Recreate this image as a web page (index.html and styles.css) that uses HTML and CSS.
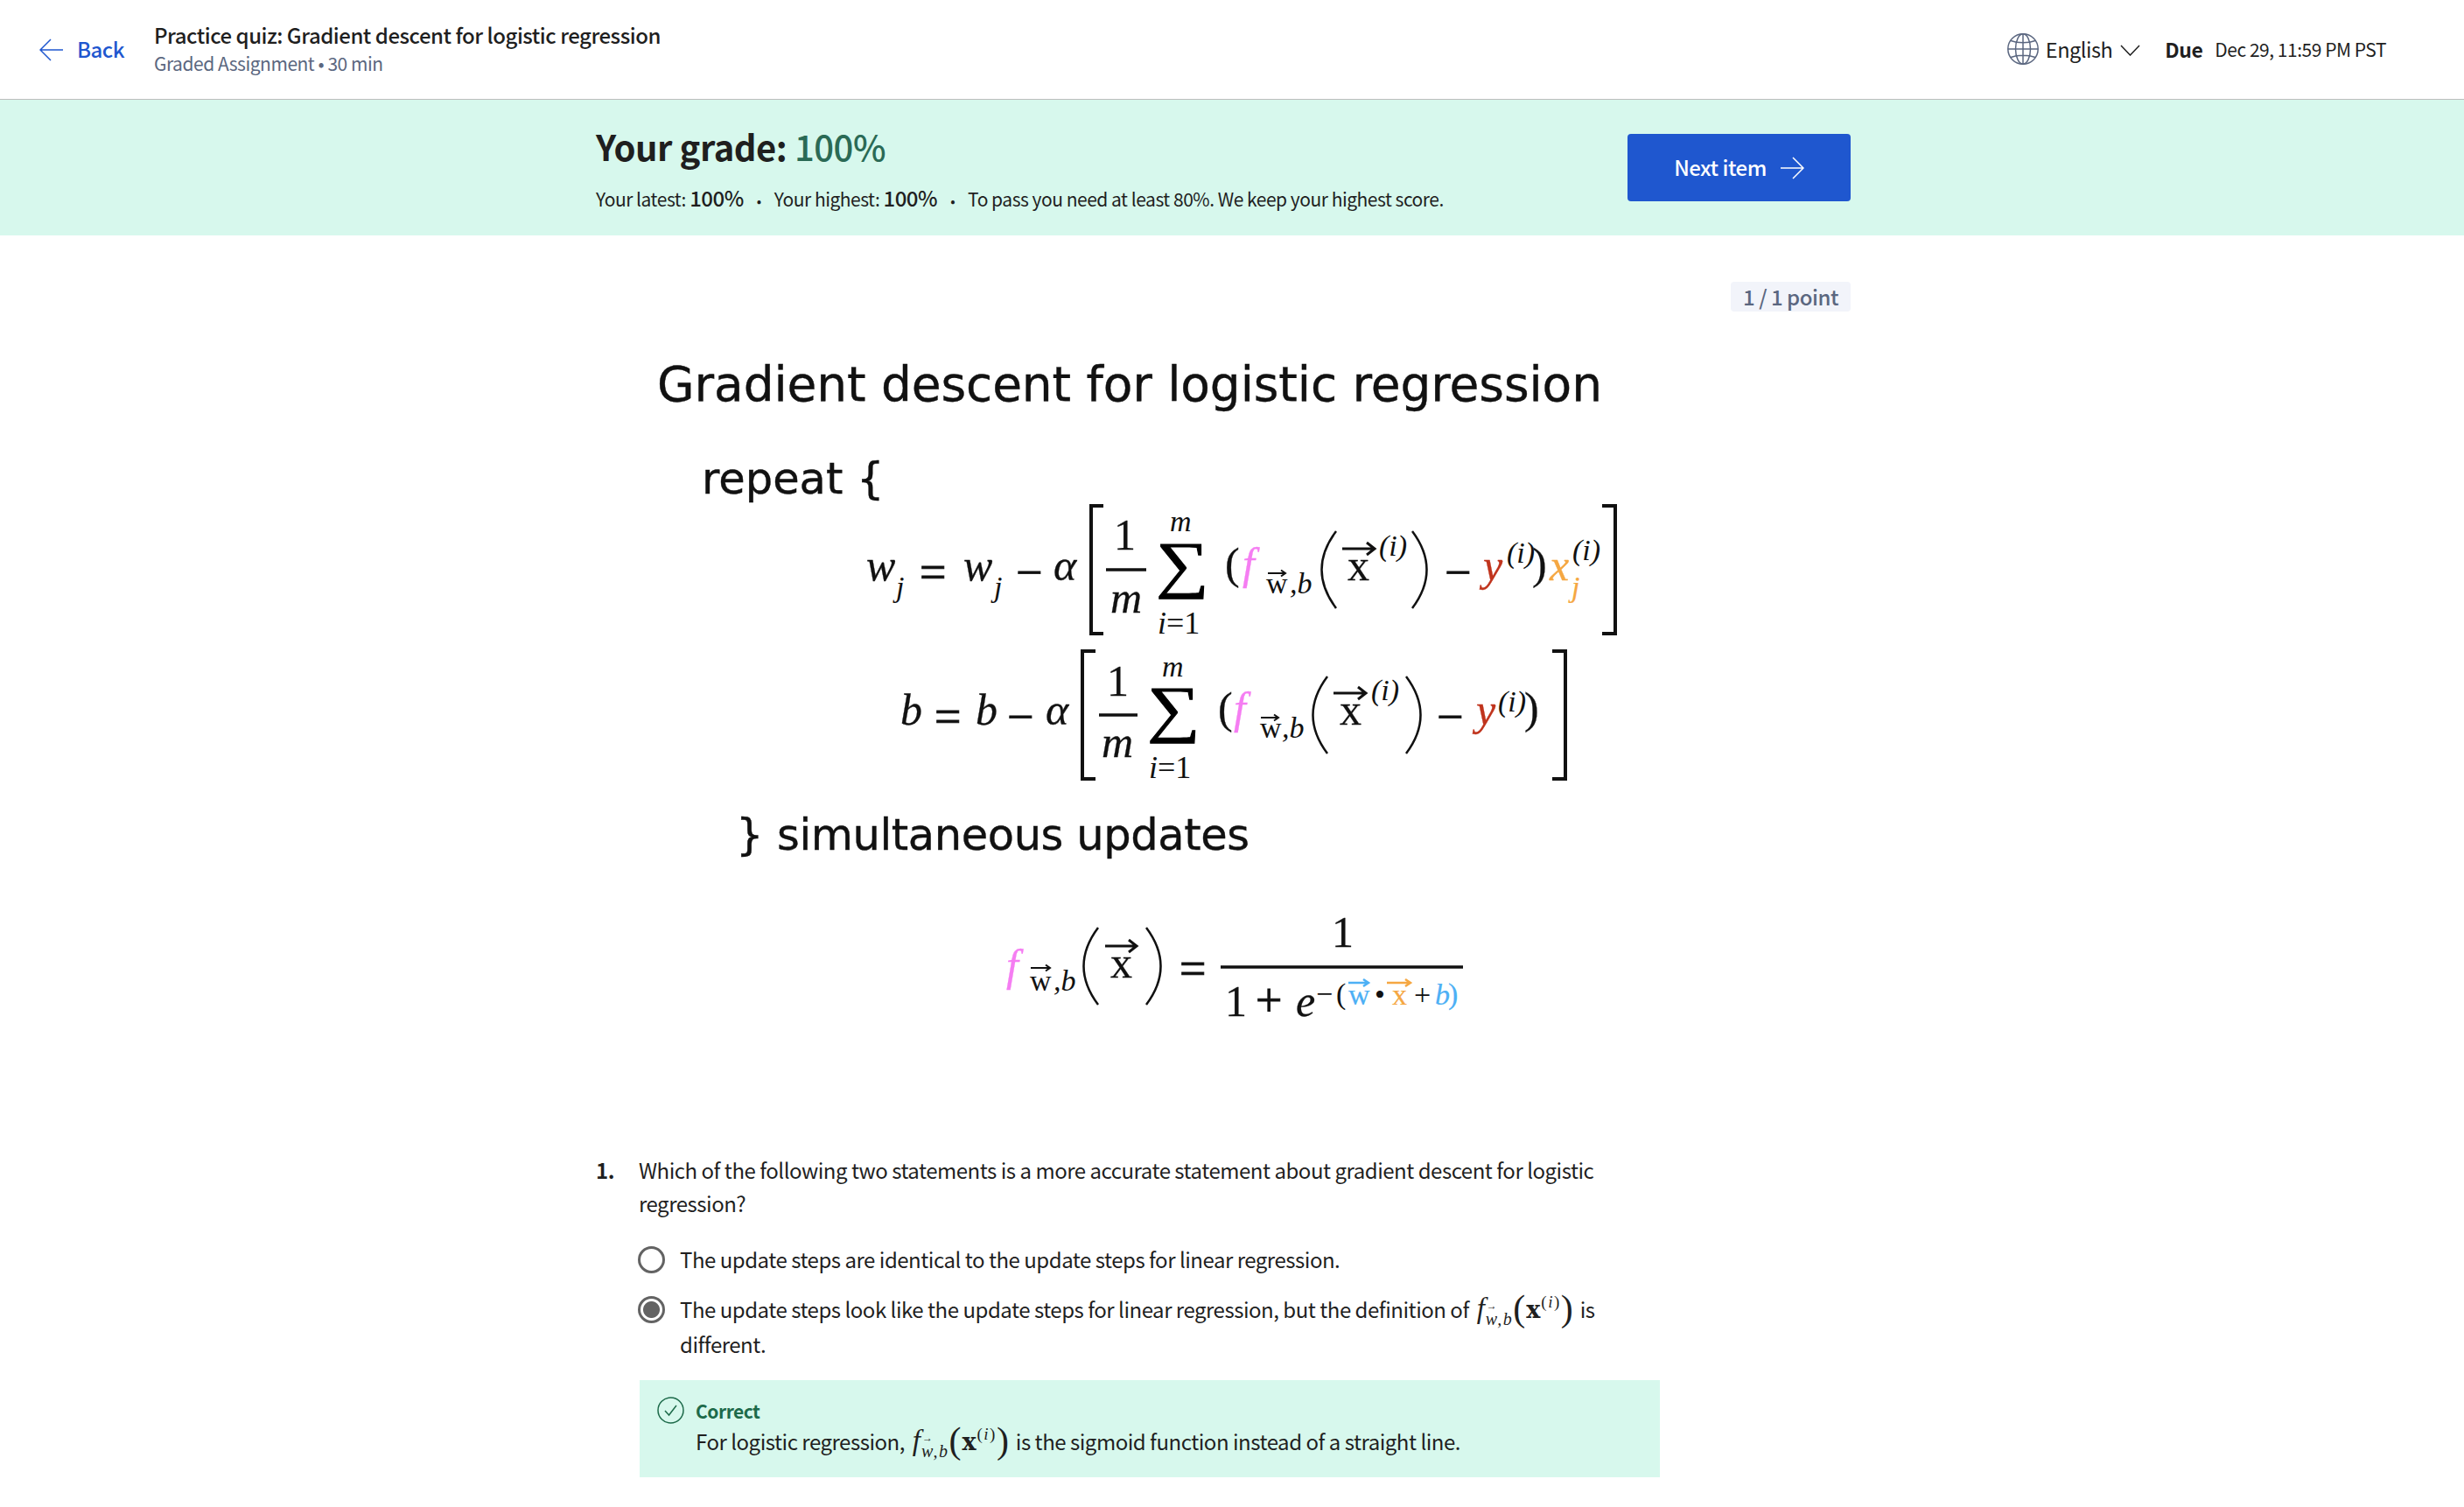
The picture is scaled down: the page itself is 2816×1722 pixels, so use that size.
FILE: index.html
```html
<!DOCTYPE html>
<html lang="en">
<head>
<meta charset="utf-8">
<title>Practice quiz: Gradient descent for logistic regression</title>
<link rel="stylesheet" href="styles.css">
</head>
<body>
<header class="topbar">
  <a class="back">
    <svg class="back-icon" viewBox="0 0 27 26"><path d="M13 1 1 13l12 12M1 13h26"/></svg>
    <span>Back</span>
  </a>
  <div class="heading">
    <div class="heading-title">Practice quiz: Gradient descent for logistic regression</div>
    <div class="heading-sub">Graded Assignment • 30 min</div>
  </div>
  <div class="lang">
    <svg class="globe" viewBox="0 0 36 36"><circle cx="18" cy="18" r="17.2"/><ellipse cx="18" cy="18" rx="8.500" ry="17.2"/><path d="M18 1v34M1 18h34M4 8.500c8 3 20 3 28 0M4 27.500c8-3 20-3 28 0"/></svg>
    <span>English</span>
    <svg class="chev" viewBox="0 0 23 13"><path d="m1 1 10.500 11L22 1"/></svg>
  </div>
  <div class="due"><b>Due</b><span>Dec 29, 11:59 PM PST</span></div>
</header>

<section class="banner">
  <div class="banner-text">
    <h1 class="grade">Your grade: <span class="grade-val">100%</span></h1>
    <p class="grade-line">Your latest: <b>100%</b><i class="dot">•</i>Your highest: <b>100%</b><i class="dot">•</i>To pass you need at least 80%. We keep your highest score.</p>
  </div>
  <a class="next"><span class="next-label">Next item</span>
    <svg class="next-icon" viewBox="0 0 27 26"><path d="M14 1l12 12-12 12M26 13H0"/></svg>
  </a>
</section>

<main class="content">
  <div class="points-row"><span class="points">1 / 1 point</span></div>

  <svg class="figure" viewBox="681 370 1434 930" role="img">
    <text class="sans" x="751" y="458" font-size="55" textLength="1080">Gradient descent for logistic regression</text>
    <text class="sans" x="802" y="564" font-size="49.500">repeat {</text>

    <!-- w_j row -->
    <text class="m it" x="990" y="663">w</text><text class="s it" x="1024" y="682">j</text>
    <text class="m op" x="1051" y="672">=</text>
    <text class="m it" x="1101" y="663">w</text><text class="s it" x="1136" y="682">j</text>
    <text class="m op" x="1161" y="672">−</text>
    <text class="m it" x="1204" y="663">α</text>
    <path class="br" d="M1261 578h-14v146h14"/>
    <text class="m" x="1273" y="628">1</text>
    <path class="bar" d="M1264 651h46"/>
    <text class="m it" x="1269" y="700">m</text>
    <text class="sum" transform="translate(1321 669) scale(1.180 1)">∑</text>
    <text class="s it" x="1337" y="607">m</text>
    <text class="s it lim" x="1323" y="724">i<tspan class="rm">=1</tspan></text>
    <text class="m" x="1400" y="661">(</text>
    <text class="m it pink" x="1420" y="661">f</text>
    <text class="s" x="1447" y="678">w</text><path class="arr" d="M1449 655h20m-5-3.500 5 3.500-5 3.500"/>
    <text class="s it" x="1474" y="678">,b</text>
    <path class="dl" d="M1527 607Q1494 651 1527 695"/>
    <text class="m" x="1540" y="663">x</text><path class="arr thick" d="M1534 627h37m-9-7 9 7-9 7"/>
    <text class="s it" x="1576" y="635">(i)</text>
    <path class="dl" d="M1614 607Q1647 651 1614 695"/>
    <text class="m op" x="1651" y="672">−</text>
    <text class="m it red" x="1695" y="663">y</text>
    <text class="s it" x="1722" y="643">(i)</text>
    <text class="m" x="1751" y="661">)</text>
    <text class="m it orange" x="1771" y="663">x</text>
    <text class="s it" x="1797" y="640">(i)</text>
    <text class="s it orange" x="1796" y="682">j</text>
    <path class="br" d="M1831 578h15v146h-15"/>

    <!-- b row -->
    <text class="m it" x="1029" y="828">b</text>
    <text class="m op" x="1068" y="837">=</text>
    <text class="m it" x="1115" y="828">b</text>
    <text class="m op" x="1151" y="837">−</text>
    <text class="m it" x="1195" y="828">α</text>
    <path class="br" d="M1252 744h-15v146h15"/>
    <text class="m" x="1265" y="795">1</text>
    <path class="bar" d="M1256 817h44"/>
    <text class="m it" x="1259" y="865">m</text>
    <text class="sum" transform="translate(1311 834) scale(1.180 1)">∑</text>
    <text class="s it" x="1328" y="773">m</text>
    <text class="s it lim" x="1313" y="889">i<tspan class="rm">=1</tspan></text>
    <text class="m" x="1392" y="826">(</text>
    <text class="m it pink" x="1410" y="826">f</text>
    <text class="s" x="1440" y="843">w</text><path class="arr" d="M1441 820h20m-5-3.500 5 3.500-5 3.500"/>
    <text class="s it" x="1465" y="843">,b</text>
    <path class="dl" d="M1517 773Q1484 817 1517 861"/>
    <text class="m" x="1531" y="828">x</text><path class="arr thick" d="M1524 792h37m-9-7 9 7-9 7"/>
    <text class="s it" x="1567" y="800">(i)</text>
    <path class="dl" d="M1607 773Q1640 817 1607 861"/>
    <text class="m op" x="1642" y="837">−</text>
    <text class="m it red" x="1687" y="828">y</text>
    <text class="s it" x="1712" y="813">(i)</text>
    <text class="m" x="1742" y="826">)</text>
    <path class="br" d="M1774 744h15v146h-15"/>

    <text class="sans" x="841" y="971" font-size="49.500">}</text>
    <text class="sans" x="888" y="971" font-size="49.500" textLength="540">simultaneous updates</text>

    <!-- sigmoid -->
    <text class="m it pink" x="1150" y="1120">f</text>
    <text class="s" x="1177" y="1132">w</text><path class="arr" d="M1178 1106h22m-5-3.500 5 3.500-5 3.500"/>
    <text class="s it" x="1204" y="1132">,b</text>
    <path class="dl" d="M1255 1060Q1222 1104 1255 1148"/>
    <text class="m" x="1269" y="1117">x</text><path class="arr thick" d="M1263 1081h36m-9-7 9 7-9 7"/>
    <path class="dl" d="M1310 1060Q1343 1104 1310 1148"/>
    <text class="m op" x="1348" y="1125">=</text>
    <path class="bar" d="M1395 1105h277"/>
    <text class="m" x="1522" y="1082">1</text>
    <text class="m" x="1400" y="1161">1</text>
    <text class="m op" x="1435" y="1161">+</text>
    <text class="m it" x="1481" y="1161">e</text>
    <text class="s" x="1504" y="1147">−</text>
    <text class="s" x="1527" y="1147">(</text>
    <text class="s blue" x="1541" y="1148">w</text><path class="arr blue-s" d="M1541 1123h23m-6-4 6 4-6 4"/>
    <text class="s" x="1571" y="1148">•</text>
    <text class="s orange" x="1591" y="1148">x</text><path class="arr orange-s" d="M1585 1123h27m-6-4 6 4-6 4"/>
    <text class="s" x="1616" y="1148">+</text>
    <text class="s it blue" x="1640" y="1148">b</text>
    <text class="s blue" x="1655" y="1147">)</text>
  </svg>

  <section class="question">
    <div class="q-num">1.</div>
    <div class="q-body">
      <p class="q-text">Which of the following two statements is a more accurate statement about gradient descent for logistic regression?</p>
      <div class="option">
        <span class="radio"></span>
        <span class="opt-text">The update steps are identical to the update steps for linear regression.</span>
      </div>
      <div class="option option-sel">
        <span class="radio radio-on"></span>
        <span class="opt-text">The update steps look like the update steps for linear regression, but the definition of <span class="tex"><i>f</i><sub><i class="vec">w</i><i>,b</i></sub><span class="tp">(</span><b>x</b><sup>(<i>i</i>)</sup><span class="tp">)</span></span> is different.</span>
      </div>
      <div class="feedback">
        <svg class="check" viewBox="0 0 31 31"><circle cx="15.500" cy="15.500" r="14.500"/><path d="m9 16 4.500 5L22 10"/></svg>
        <div>
          <div class="fb-title">Correct</div>
          <div class="fb-text">For logistic regression, <span class="tex"><i>f</i><sub><i class="vec">w</i><i>,b</i></sub><span class="tp">(</span><b>x</b><sup>(<i>i</i>)</sup><span class="tp">)</span></span> is the sigmoid function instead of a straight line.</div>
        </div>
      </div>
    </div>
  </section>
</main>
</body>
</html>
```
FILE: styles.css
```css
* { box-sizing: border-box; }
html, body { margin: 0; padding: 0; background: #fff; }
body {
  font-family: "Noto Sans CJK JP", "Noto Sans", sans-serif;
  color: #1f1f1f;
  height: 1722px;
  overflow: hidden;
  letter-spacing: -.03em;
}
.topbar {
  height: 114px;
  border-bottom: 1px solid #bdbdbd;
  display: flex;
  align-items: center;
  padding: 0 89px 0 45px;
}
.back { display: flex; align-items: center; gap: 16px; color: #1f57cf; font-size: 24px; font-weight: 500; width: 131px; margin-top: -2px; }
.back-icon { width: 27px; height: 26px; fill: none; stroke: #1f57cf; stroke-width: 1.500; margin-top: 2px; }
.heading { flex: 1; margin-top: -2px; }
.heading-title { font-size: 24px; font-weight: 500; line-height: 32px; }
.heading-sub { font-size: 21px; line-height: 32px; color: #5b6780; }
.lang { display: flex; align-items: center; font-size: 23.500px; color: #1f1f1f; margin-top: -2px; }
.globe { width: 36px; height: 36px; fill: none; stroke: #5b6780; stroke-width: 1.500; margin-right: 8px; }
.chev { width: 23px; height: 13px; fill: none; stroke: #1f1f1f; stroke-width: 1.500; margin: 4px 28px 0 9px; }
.due { display: flex; align-items: center; gap: 14px; font-size: 21px; margin-top: -2px; }
.due b { font-size: 23px; font-weight: 600; }

.banner {
  height: 155px;
  background: #d7f8ed;
  display: flex;
  align-items: flex-start;
  justify-content: space-between;
  padding: 0 701px 0 681px;
}
.grade { margin: 25px 0 0; font-size: 40px; line-height: 56px; font-weight: 600; }
.grade-val { color: #2a6a55; font-weight: 500; }
.grade-line { margin: 16px 0 0; font-size: 21px; line-height: 30px; }
.grade-line b { font-size: 24px; font-weight: 500; }
.dot { font-style: normal; margin: 0 15px; font-size: 16px; }
.next {
  margin-top: 39px;
  width: 255px;
  height: 77px;
  background: #1f57cf;
  border-radius: 4px;
  color: #fff;
  font-size: 24px;
  font-weight: 500;
  display: flex;
  align-items: center;
  justify-content: center;
  gap: 16px;
}
.next-label { margin-top: -2px; }
.next-icon { width: 27px; height: 26px; fill: none; stroke: #fff; stroke-width: 1.500; }

.content { padding: 0 701px 0 681px; }
.points-row { display: flex; justify-content: flex-end; padding-top: 53px; }
.points {
  display: block;
  height: 34px;
  padding: 0 14px;
  background: #f2f4fa;
  border-radius: 4px;
  font-size: 24px;
  line-height: 34px;
  font-weight: 500;
  color: #5b6780;
}
.figure { display: block; width: 1434px; height: 930px; margin-top: 14px; letter-spacing: 0; }

.sans { font-family: "DejaVu Sans", sans-serif; fill: #111; stroke: #111; stroke-width: .4; }
.m { font-family: "Liberation Serif", serif; font-size: 50px; fill: #111; stroke: #111; stroke-width: .3; }
.s { font-family: "Liberation Serif", serif; font-size: 34px; fill: #111; stroke-width: .2; }
.lim { font-size: 36px; }
.op { font-size: 54px; stroke-width: .9; }
.it { font-style: italic; }
.rm { font-style: normal; }
.pink { fill: #f57df2; stroke: #f57df2; }
.red { fill: #c0341d; stroke: #c0341d; }
.orange { fill: #f5a742; stroke: #f5a742; }
.blue { fill: #4db0f5; stroke: #4db0f5; }
.sum { font-family: "Liberation Serif", serif; font-size: 72px; fill: #000; stroke: #000; stroke-width: 1; }
.dl { fill: none; stroke: #111; stroke-width: 2.500; }
.br { fill: none; stroke: #111; stroke-width: 4; }
.bar { fill: none; stroke: #111; stroke-width: 3.500; }
.arr { fill: none; stroke: #111; stroke-width: 2; }
.thick { stroke-width: 3; }
.blue-s { stroke: #4db0f5; stroke-width: 2.500; }
.orange-s { stroke: #f5a742; stroke-width: 2.500; }

.question { display: flex; margin-top: 18px; font-size: 24px; line-height: 38px; }
.q-num { width: 49px; font-weight: 600; font-size: 24px; }
.q-body { width: 1167px; }
.q-text { margin: 0; width: 1100px; }
.option { display: flex; gap: 17px; margin-top: 25px; margin-left: -1px; }
.option-sel { margin-top: 17px; }
.opt-text { width: 1100px; line-height: 40px; }
.radio { flex: none; width: 31px; height: 31px; border: 3px solid #636363; border-radius: 50%; margin-top: 5px; background: #fff; }
.radio-on { background: radial-gradient(circle, #636363 0 9px, #fff 10px); margin-top: 5px; }
.tex { font-family: "Liberation Serif", serif; font-size: 33px; line-height: 0; letter-spacing: 0; margin: 0 3px 0 4px; }
.tex sub { font-size: 20px; line-height: 0; letter-spacing: 1.500px; margin-left: 1px; }
.tex sup { font-size: 19px; line-height: 0; margin-left: 1px; letter-spacing: 1.500px; }
.tex .tp { font-size: 42px; font-weight: 300; line-height: 0; vertical-align: -3px; }
.tex b { font-family: "DejaVu Serif", serif; font-size: 27px; line-height: 0; margin-left: 1px; }
.vec { position: relative; }
.vec::before { content: "→"; position: absolute; left: 1px; top: -10px; font-size: 12px; font-style: normal; line-height: 12px; }
.feedback {
  display: flex;
  gap: 13px;
  margin-top: 21px;
  margin-left: 1px;
  height: 111px;
  padding: 19px 20px 0;
  background: #d7f8ed;
}
.check { flex: none; width: 31px; height: 31px; fill: none; stroke: #1d6a4a; stroke-width: 1.500; }
.fb-title { font-size: 21px; line-height: 32px; font-weight: 700; color: #1d6a4a; }
.fb-text { line-height: 38px; }
```
